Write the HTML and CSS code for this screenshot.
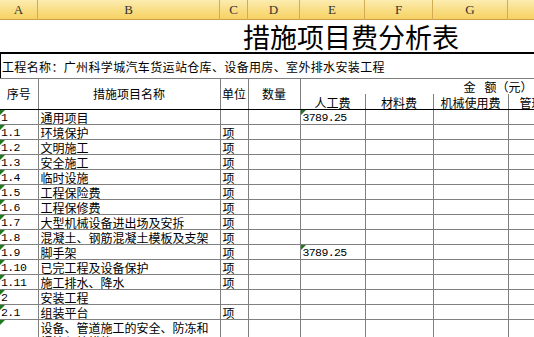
FILE: index.html
```html
<!DOCTYPE html>
<html lang="zh-CN">
<head>
    <meta charset="UTF-8">
    <title>措施项目费分析表</title>
    <link rel="stylesheet" href="styles.css">
</head>
<body>
    <div class="sheet">
        <div class="colbar">
            <div>A</div><div>B</div><div>C</div><div>D</div>
            <div>E</div><div>F</div><div>G</div><div>H</div>
        </div>

        <div class="title">措施项目费分析表</div>
        <div class="project">工程名称：广州科学城汽车货运站仓库、设备用房、室外排水安装工程</div>

        <table class="grid">
            <colgroup>
                <col style="width:38px"><col style="width:182px"><col style="width:28px"><col style="width:52px">
                <col style="width:65px"><col style="width:68px"><col style="width:75px"><col style="width:100px">
            </colgroup>
            <thead>
                <tr class="head-top">
                    <th rowspan="2">序号</th>
                    <th rowspan="2">措施项目名称</th>
                    <th rowspan="2">单位</th>
                    <th rowspan="2">数量</th>
                    <th colspan="4" class="amount">金<span class="gap"></span>额（元）</th>
                </tr>
                <tr class="head-sub">
                    <th>人工费</th>
                    <th>材料费</th>
                    <th>机械使用费</th>
                    <th class="cut">管理费</th>
                </tr>
            </thead>
            <tbody>
                <tr><td class="no flag">1</td><td>通用项目</td><td></td><td></td><td class="num flag">3789.25</td><td></td><td></td><td></td></tr>
                <tr><td class="no flag">1.1</td><td>环境保护</td><td>项</td><td></td><td></td><td></td><td></td><td></td></tr>
                <tr><td class="no flag">1.2</td><td>文明施工</td><td>项</td><td></td><td></td><td></td><td></td><td></td></tr>
                <tr><td class="no flag">1.3</td><td>安全施工</td><td>项</td><td></td><td></td><td></td><td></td><td></td></tr>
                <tr><td class="no flag">1.4</td><td>临时设施</td><td>项</td><td></td><td></td><td></td><td></td><td></td></tr>
                <tr><td class="no flag">1.5</td><td>工程保险费</td><td>项</td><td></td><td></td><td></td><td></td><td></td></tr>
                <tr><td class="no flag">1.6</td><td>工程保修费</td><td>项</td><td></td><td></td><td></td><td></td><td></td></tr>
                <tr><td class="no flag">1.7</td><td>大型机械设备进出场及安拆</td><td>项</td><td></td><td></td><td></td><td></td><td></td></tr>
                <tr><td class="no flag">1.8</td><td>混凝土、钢筋混凝土模板及支架</td><td>项</td><td></td><td></td><td></td><td></td><td></td></tr>
                <tr><td class="no flag">1.9</td><td>脚手架</td><td>项</td><td></td><td class="num flag">3789.25</td><td></td><td></td><td></td></tr>
                <tr><td class="no flag">1.10</td><td>已完工程及设备保护</td><td>项</td><td></td><td></td><td></td><td></td><td></td></tr>
                <tr><td class="no flag">1.11</td><td>施工排水、降水</td><td>项</td><td></td><td></td><td></td><td></td><td></td></tr>
                <tr><td class="no flag">2</td><td>安装工程</td><td></td><td></td><td></td><td></td><td></td><td></td></tr>
                <tr><td class="no flag">2.1</td><td>组装平台</td><td>项</td><td></td><td></td><td></td><td></td><td></td></tr>
                <tr class="tall"><td class="no flag">2.2</td><td>设备、管道施工的安全、防冻和焊接保护措施</td><td>项</td><td></td><td></td><td></td><td></td><td></td></tr>
            </tbody>
        </table>
    </div>
</body>
</html>
```

FILE: styles.css
```css
body {
    margin: 0;
    background: #ffffff;
    overflow: hidden;
    font-family: "Noto Sans CJK SC", "Liberation Sans", sans-serif;
    color: #000000;
}

.sheet {
    width: 534px;
    height: 337px;
    overflow: hidden;
}

/* column letters */
.colbar {
    display: grid;
    grid-template-columns: 38px 182px 28px 52px 65px 68px 75px 100px;
    width: 608px;
    height: 19px;
    background: linear-gradient(#fcecb0, #f8d978 70%, #f6d263);
    border-bottom: 1px solid #c9a14a;
}

.colbar div {
    border-right: 1px solid #d2ab55;
    text-align: center;
    font-family: "Liberation Serif", serif;
    font-size: 13px;
    line-height: 20px;
    color: #333333;
}

.title {
    height: 32px;
    padding-left: 243px;
    font-size: 27px;
    line-height: 34px;
    white-space: nowrap;
}

.project {
    height: 24px;
    border-top: 2px solid #000000;
    border-left: 1px solid #000000;
    padding-left: 1px;
    font-size: 12px;
    letter-spacing: 0.35px;
    line-height: 26px;
    white-space: nowrap;
}

.grid {
    width: 608px;
    table-layout: fixed;
    border-collapse: collapse;
    font-size: 12px;
}

.grid th,
.grid td {
    border: 1px solid #808080;
    padding: 0;
    line-height: 13px;
    white-space: nowrap;
    overflow: hidden;
}

.grid th:first-child,
.grid td:first-child {
    border-left: none;
}

.grid th {
    font-weight: normal;
    vertical-align: middle;
    border-bottom: 1px solid #000000;
}

.head-top {
    height: 15px;
}

.head-top .amount {
    border-bottom: none;
    text-align: left;
    padding-left: 163px;
    vertical-align: top;
    line-height: 15px;
}

.gap {
    display: inline-block;
    width: 9px;
}

.head-sub {
    height: 15px;
}

.head-sub th {
    border-top: none;
    vertical-align: bottom;
    line-height: 13px;
}

.head-sub .cut {
    text-align: left;
    padding-left: 11px;
}

.grid tbody tr {
    height: 15px;
}

.grid td {
    vertical-align: bottom;
    padding-left: 2px;
}

.grid td.no {
    padding-left: 1px;
}

.no,
.num {
    position: relative;
    font-family: "Liberation Mono", monospace;
    font-size: 11.5px;
    letter-spacing: -0.6px;
}

.flag::before {
    content: "";
    position: absolute;
    left: 0;
    top: 0;
    border-top: 5px solid #1f7a1f;
    border-right: 5px solid transparent;
}

.grid tr.tall {
    height: 30px;
}

.tall td {
    white-space: normal;
    line-height: 14px;
}
```
